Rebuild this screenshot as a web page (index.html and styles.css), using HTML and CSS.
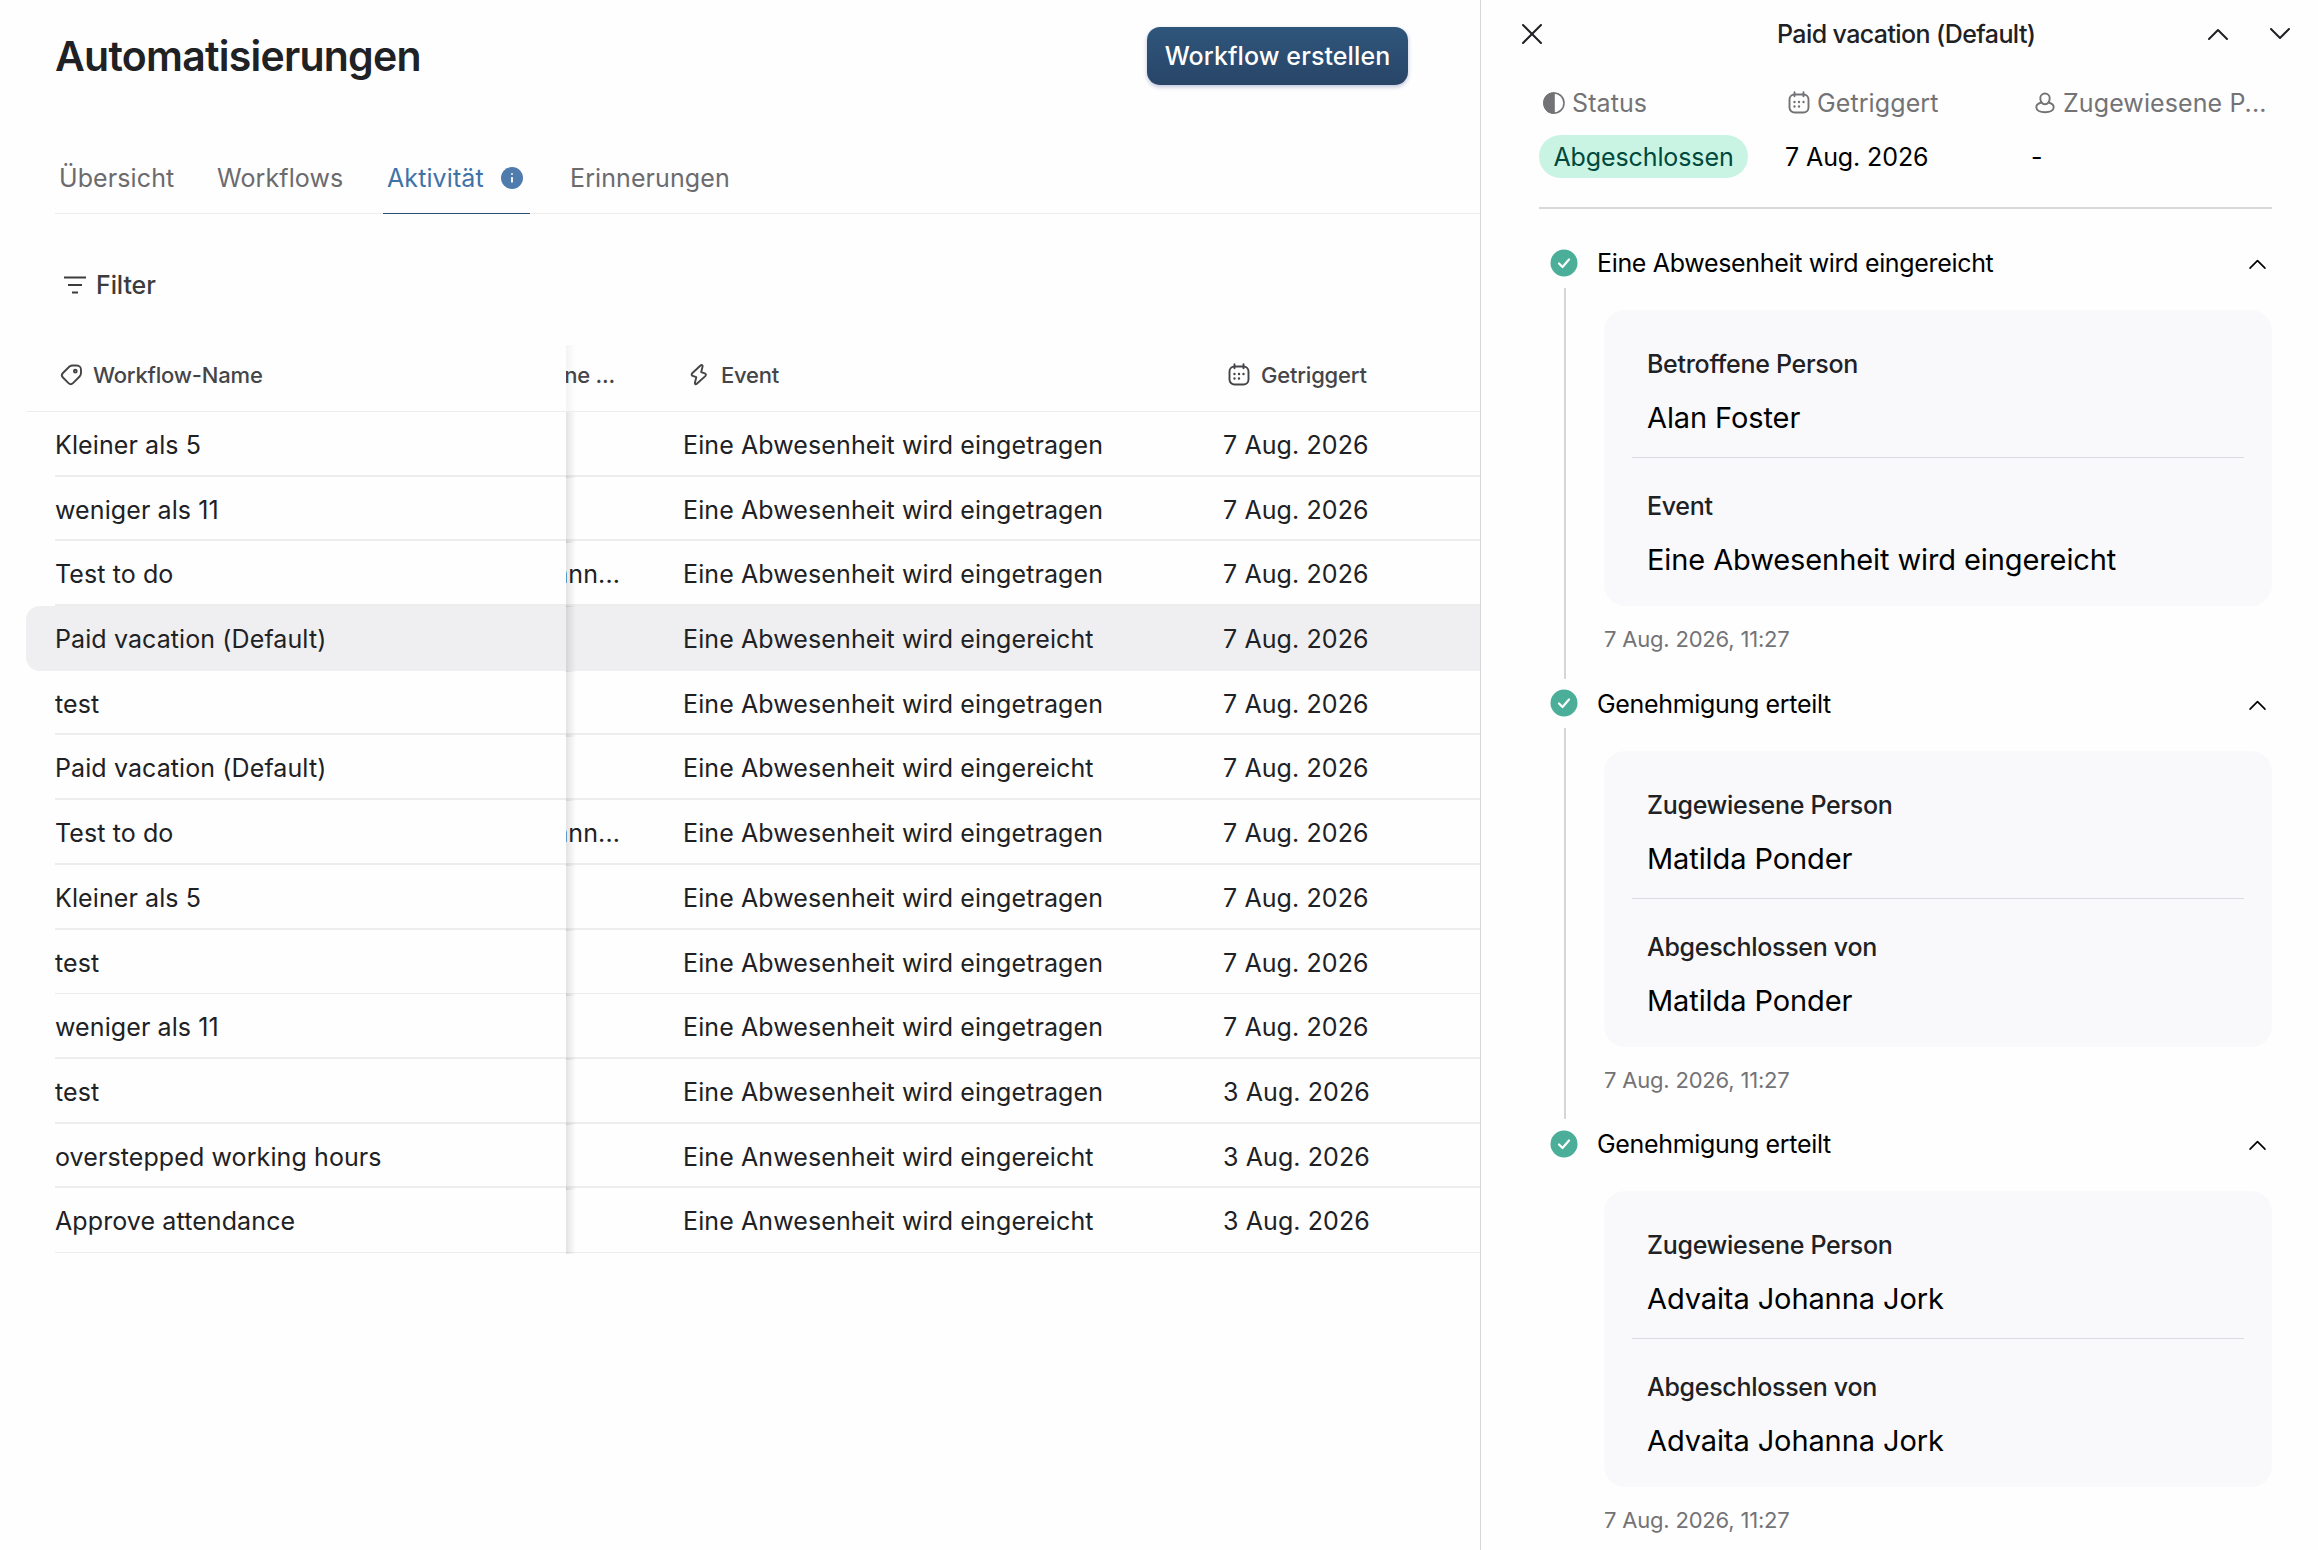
FILE: index.html
```
<!DOCTYPE html>
<html lang="de">
<head>
<meta charset="utf-8">
<title>Automatisierungen</title>
<link rel="stylesheet" href="styles.css">
</head>
<body>

<svg class="sprite" width="0" height="0">
  <symbol id="tag" viewBox="0 0 24 24"><path d="M14 2.500h3.800A4.200 4.200 0 0 1 22 6.700V10c0 1.400-.5 2.600-1.400 3.500l-6.600 6.600a3.200 3.200 0 0 1-4.500 0l-5.600-5.600a3.200 3.200 0 0 1 0-4.500l6.600-6.500a5 5 0 0 1 3.500-1z"/><circle cx="16.300" cy="8.200" r="1.400"/></symbol>
  <symbol id="bolt" viewBox="0 0 24 24"><path d="M13.500 2.500 5.200 10.200c-1 1-.7 2.300.5 2.700l3.600 1.300-1.400 5.500c-.3 1.500.8 2.100 1.900 1.100l8.500-7.700c1-1 .7-2.300-.5-2.700l-3.600-1.300 1.400-5.500c.3-1.500-1-2.100-2.100-1.100z"/></symbol>
  <symbol id="cal" viewBox="0 0 24 24"><rect x="2.500" y="3.500" width="19" height="18" rx="5"/><path d="M7.500 1.200v4M16.500 1.200v4"/><path class="dots" d="M7.500 11h.01M12 11h.01M16.500 11h.01M7.500 15.500h.01M12 15.500h.01"/></symbol>
  <symbol id="person" viewBox="0 0 24 24"><path d="M12 2.500a4.700 4.700 0 0 1 4.700 4.700c0 2.900-1.700 6.100-4.700 6.100s-4.700-3.200-4.700-6.100A4.700 4.700 0 0 1 12 2.500z"/><path d="M8.300 11.500C5.200 12.300 3.300 14 3.300 16.300c0 3 3.600 4.900 8.700 4.900s8.700-1.900 8.700-4.900c0-2.300-1.900-4-5-4.800"/></symbol>
  <symbol id="up" viewBox="0 0 20 12"><path d="M1 11l9-9 9 9"/></symbol>
  <symbol id="check" viewBox="0 0 28 28"><circle cx="14" cy="14" r="13.500"/><path d="M9 14.500l3.500 3.500 6.500-7.500"/></symbol>
</svg>

<div class="page">
<main class="main">
  <div class="head">
    <h1>Automatisierungen</h1>
    <button class="create">Workflow erstellen</button>
  </div>

  <nav class="tabs">
    <a class="tab t1">Übersicht</a>
    <a class="tab t2">Workflows</a>
    <a class="tab t3 active">Aktivität <svg class="info" viewBox="0 0 22 22"><circle cx="11" cy="11" r="11"/><path d="M11 10v5.500M11 6.200v1.600"/></svg></a>
    <a class="tab t4">Erinnerungen</a>
  </nav>

  <div class="filter">
    <svg viewBox="0 0 22 18"><path d="M0 1.500h22M4 9h14M8 16.500h6"/></svg>
    <span>Filter</span>
  </div>

  <div class="table">
    <div class="thead">
      <div class="c1"><svg class="ic"><use href="#tag"/></svg><span>Workflow-Name</span></div>
      <div class="c2"><span>ne ...</span></div>
      <div class="c3"><svg class="ic"><use href="#bolt"/></svg><span>Event</span></div>
      <div class="c4"><svg class="ic"><use href="#cal"/></svg><span>Getriggert</span></div>
    </div>
    <div class="tbody">
      <div class="row"><div class="c1">Kleiner als 5</div><div class="c2"></div><div class="c3">Eine Abwesenheit wird eingetragen</div><div class="c4">7 Aug. 2026</div></div>
      <div class="row"><div class="c1">weniger als 11</div><div class="c2"></div><div class="c3">Eine Abwesenheit wird eingetragen</div><div class="c4">7 Aug. 2026</div></div>
      <div class="row"><div class="c1">Test to do</div><div class="c2"><span>ann...</span></div><div class="c3">Eine Abwesenheit wird eingetragen</div><div class="c4">7 Aug. 2026</div></div>
      <div class="row selected"><div class="c1">Paid vacation (Default)</div><div class="c2"></div><div class="c3">Eine Abwesenheit wird eingereicht</div><div class="c4">7 Aug. 2026</div></div>
      <div class="row"><div class="c1">test</div><div class="c2"></div><div class="c3">Eine Abwesenheit wird eingetragen</div><div class="c4">7 Aug. 2026</div></div>
      <div class="row"><div class="c1">Paid vacation (Default)</div><div class="c2"></div><div class="c3">Eine Abwesenheit wird eingereicht</div><div class="c4">7 Aug. 2026</div></div>
      <div class="row"><div class="c1">Test to do</div><div class="c2"><span>ann...</span></div><div class="c3">Eine Abwesenheit wird eingetragen</div><div class="c4">7 Aug. 2026</div></div>
      <div class="row"><div class="c1">Kleiner als 5</div><div class="c2"></div><div class="c3">Eine Abwesenheit wird eingetragen</div><div class="c4">7 Aug. 2026</div></div>
      <div class="row thin"><div class="c1">test</div><div class="c2"></div><div class="c3">Eine Abwesenheit wird eingetragen</div><div class="c4">7 Aug. 2026</div></div>
      <div class="row"><div class="c1">weniger als 11</div><div class="c2"></div><div class="c3">Eine Abwesenheit wird eingetragen</div><div class="c4">7 Aug. 2026</div></div>
      <div class="row"><div class="c1">test</div><div class="c2"></div><div class="c3">Eine Abwesenheit wird eingetragen</div><div class="c4">3 Aug. 2026</div></div>
      <div class="row"><div class="c1">overstepped working hours</div><div class="c2"></div><div class="c3">Eine Anwesenheit wird eingereicht</div><div class="c4">3 Aug. 2026</div></div>
      <div class="row thin"><div class="c1">Approve attendance</div><div class="c2"></div><div class="c3">Eine Anwesenheit wird eingereicht</div><div class="c4">3 Aug. 2026</div></div>
    </div>
  </div>
</main>

<aside class="panel">
  <div class="panel-head">
    <svg class="close" viewBox="0 0 20 20"><path d="M1 1l18 18M19 1L1 19"/></svg>
    <h2>Paid vacation (Default)</h2>
    <div class="arrows">
      <svg class="chev"><use href="#up"/></svg>
      <svg class="chev down"><use href="#up"/></svg>
    </div>
  </div>

  <div class="meta">
    <div>
      <div class="meta-label"><svg class="half" viewBox="0 0 22 22"><circle cx="11" cy="11" r="10"/><path d="M11 1a10 10 0 0 0 0 20z"/></svg><span>Status</span></div>
      <span class="pill">Abgeschlossen</span>
    </div>
    <div>
      <div class="meta-label"><svg class="ic"><use href="#cal"/></svg><span>Getriggert</span></div>
      <div class="meta-value">7 Aug. 2026</div>
    </div>
    <div>
      <div class="meta-label"><svg class="ic"><use href="#person"/></svg><span>Zugewiesene P...</span></div>
      <div class="meta-value">-</div>
    </div>
  </div>

  <div class="step">
    <div class="rail"><svg class="check"><use href="#check"/></svg></div>
    <div class="step-head"><h3>Eine Abwesenheit wird eingereicht</h3><svg class="chev small" viewBox="0 0 20 12"><use href="#up"/></svg></div>
    <div class="step-body">
      <div class="card">
        <div class="field"><label>Betroffene Person</label><p>Alan Foster</p></div>
        <div class="field"><label>Event</label><p>Eine Abwesenheit wird eingereicht</p></div>
      </div>
      <time>7 Aug. 2026, 11:27</time>
    </div>
  </div>

  <div class="step">
    <div class="rail"><svg class="check"><use href="#check"/></svg></div>
    <div class="step-head"><h3>Genehmigung erteilt</h3><svg class="chev small" viewBox="0 0 20 12"><use href="#up"/></svg></div>
    <div class="step-body">
      <div class="card">
        <div class="field"><label>Zugewiesene Person</label><p>Matilda Ponder</p></div>
        <div class="field"><label>Abgeschlossen von</label><p>Matilda Ponder</p></div>
      </div>
      <time>7 Aug. 2026, 11:27</time>
    </div>
  </div>

  <div class="step last">
    <div class="rail"><svg class="check"><use href="#check"/></svg></div>
    <div class="step-head"><h3>Genehmigung erteilt</h3><svg class="chev small" viewBox="0 0 20 12"><use href="#up"/></svg></div>
    <div class="step-body">
      <div class="card">
        <div class="field"><label>Zugewiesene Person</label><p>Advaita Johanna Jork</p></div>
        <div class="field"><label>Abgeschlossen von</label><p>Advaita Johanna Jork</p></div>
      </div>
      <time>7 Aug. 2026, 11:27</time>
    </div>
  </div>
</aside>
</div>

</body>
</html>
```
FILE: styles.css
```
* {
  box-sizing: border-box;
}

body {
  margin: 0;
  background: #fefefe;
  color: #202124;
  font-family: Inter, sans-serif;
  font-size: 25px;
  letter-spacing: 0.1px;
  overflow: hidden;
}

h1, h2, h3, p {
  margin: 0;
}

svg {
  fill: none;
  stroke: currentColor;
  stroke-linecap: round;
  stroke-linejoin: round;
  flex: none;
}

.sprite {
  display: none;
}

.ic {
  width: 24px;
  height: 24px;
  stroke-width: 1.9;
}

.dots {
  stroke-width: 2.4;
}

.page {
  display: flex;
  height: 1550px;
  overflow: hidden;
}

.main {
  width: 1480px;
  overflow: hidden;
}

/* header */
.head {
  display: flex;
  align-items: center;
  justify-content: space-between;
  height: 112px;
  padding: 0 72px 0 55px;
}

h1 {
  font-size: 41px;
  font-weight: 600;
  letter-spacing: -0.75px;
}

.create {
  width: 261px;
  height: 58px;
  padding: 0;
  border: 0;
  border-radius: 13px;
  background: linear-gradient(#2f567b, #284568);
  box-shadow: 0 2px 4px rgba(40, 60, 140, 0.3);
  color: #fff;
  font: 500 25px Inter, sans-serif;
  letter-spacing: 0.1px;
}

.tabs {
  display: flex;
  height: 102px;
  margin-left: 55px;
  border-bottom: 1px solid #ededee;
  color: #6b6b6e;
}

.tab {
  height: 102px;
  padding: 51px 4px 0;
  line-height: 30px;
}

.t1 {
  width: 158px;
}

.t2 {
  width: 170px;
}

.t3 {
  display: flex;
  justify-content: space-between;
  width: 147px;
  padding-right: 7px;
}

.t4 {
  margin-left: 36px;
}

.active {
  border-bottom: 1px solid #2c4f72;
  color: #3f73a8;
}

.info {
  width: 22px;
  height: 22px;
  margin-top: 4px;
  fill: #4f7cac;
  stroke: none;
}

.info path {
  stroke: #fff;
  stroke-width: 1.8;
  stroke-linecap: butt;
}

.filter {
  display: flex;
  align-items: center;
  gap: 10px;
  height: 30px;
  margin: 56px 0 0 64px;
  color: #3c3c3e;
  font-weight: 500;
  letter-spacing: -0.1px;
}

.filter svg {
  width: 22px;
  height: 18px;
  stroke-width: 2;
  stroke-linecap: butt;
}

/* table */
.table {
  margin: 45px 0 0 26px;
}

.thead, .row {
  display: grid;
  grid-template-columns: 540px 117px 540px 257px;
}

.thead {
  height: 67px;
  border-bottom: 1px solid #ededee;
  color: #454548;
  font-size: 22px;
  font-weight: 500;
  letter-spacing: -0.2px;
  white-space: nowrap;
}

.thead > div {
  display: flex;
  align-items: center;
  padding-bottom: 7px;
}

.thead .c1 {
  gap: 10px;
  padding-left: 33px;
}

.thead .c3 {
  gap: 10px;
  padding-left: 4px;
}

.thead .c4 {
  gap: 10px;
  padding-left: 4px;
}

.row {
  height: 64.7px;
  line-height: 66px;
  background: linear-gradient(#ededee, #ededee) 29px 100% / 100% 2px no-repeat;
}

.row.thin {
  background-size: 100% 1px;
}

.row.selected {
  border-radius: 14px 0 0 14px;
  background: #efeff1;
}

.row .c1 {
  padding-left: 29px;
}

.c2 {
  justify-content: flex-end;
  padding-right: 63px;
  background: linear-gradient(90deg, rgba(0, 0, 0, 0.11), rgba(0, 0, 0, 0.07) 3px, rgba(0, 0, 0, 0) 10px);
}

.row .c2 {
  display: flex;
  overflow: hidden;
}

.thead .c2 {
  padding-right: 68px;
  overflow: hidden;
  background: linear-gradient(90deg, rgba(0, 0, 0, 0.045), rgba(0, 0, 0, 0) 10px);
}

/* side panel */
.panel {
  width: 838px;
  padding-left: 58px;
  border-left: 1px solid #d6d6d8;
}

.panel-head {
  display: grid;
  grid-template-columns: 255px 1fr auto;
  align-items: center;
  height: 68px;
  margin-left: -17px;
}

.close {
  width: 20px;
  height: 20px;
  stroke-width: 2;
}

h2 {
  font-size: 25px;
  font-weight: 500;
  letter-spacing: -0.6px;
}

.arrows {
  display: flex;
  gap: 42px;
  padding-right: 28px;
}

.chev {
  width: 20px;
  height: 12px;
  stroke-width: 2;
}

.down {
  transform: rotate(180deg);
}

.small {
  width: 17px;
  height: 10px;
  margin-top: 2px;
}

.meta {
  display: grid;
  grid-template-columns: 246px 246px 1fr;
  width: 733px;
  height: 141px;
  padding-top: 20px;
  border-bottom: 2px solid #d8d8da;
  color: #000;
}

.meta-label {
  display: flex;
  align-items: center;
  gap: 6px;
  height: 30px;
  padding-left: 2px;
  color: #737376;
  white-space: nowrap;
}

.half {
  width: 22px;
  height: 22px;
  margin: 0 1px 0 2px;
  stroke-width: 1.6;
}

.half path {
  fill: currentColor;
}

.pill {
  display: block;
  width: 209px;
  height: 43px;
  margin-top: 17px;
  border-radius: 22px;
  background: #c9f4e4;
  color: #00493c;
  letter-spacing: -0.1px;
  line-height: 44px;
  text-align: center;
}

.meta-value {
  margin-top: 17px;
  letter-spacing: -0.1px;
  line-height: 44px;
}

.step {
  display: grid;
  grid-template-columns: 58px 675px;
  grid-template-rows: 76px auto;
  height: 440.500px;
  color: #000;
}

.meta + .step {
  margin-top: 25px;
}

.rail {
  display: flex;
  flex-direction: column;
  align-items: center;
  grid-row: 1 / 3;
  width: 54px;
  padding: 14.500px 4px 0 0;
}

.rail::after {
  content: "";
  width: 2px;
  height: 391px;
  margin: 11px 0 0 2px;
  background: #d6d6d8;
}

.last .rail::after {
  display: none;
}

.check {
  width: 28px;
  height: 28px;
}

#check circle {
  fill: #4aae98;
  stroke: none;
}

#check path {
  stroke: #fff;
  stroke-width: 2.2;
}

.step-head {
  display: flex;
  align-items: center;
  justify-content: space-between;
  height: 58px;
  padding-right: 6px;
}

h3 {
  font-size: 25px;
  font-weight: 400;
  letter-spacing: -0.33px;
}

.step-body {
  padding-left: 7px;
}

.card {
  height: 296px;
  padding: 0 28px;
  border-radius: 21px;
  background: #f9f9fb;
}

.field {
  height: 147px;
  padding: 39px 0 0 15px;
}

.field + .field {
  padding-top: 33px;
  border-top: 1px solid #dcdce0;
}

.field label {
  display: block;
  color: #202124;
  font-weight: 500;
  letter-spacing: -0.3px;
  line-height: 30px;
}

.field p {
  margin-top: 22px;
  font-size: 29px;
  letter-spacing: -0.1px;
  line-height: 34px;
}

time {
  display: block;
  margin-top: 20px;
  color: #737376;
  font-size: 22px;
  letter-spacing: -0.2px;
  line-height: 27px;
}
```
